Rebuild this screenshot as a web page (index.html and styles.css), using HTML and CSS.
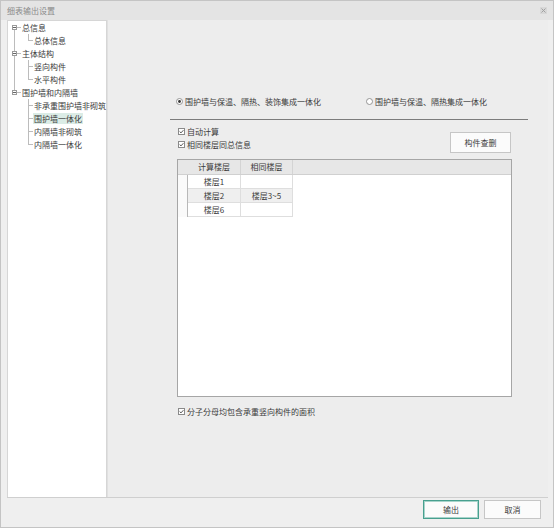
FILE: index.html
```html
<!DOCTYPE html>
<html lang="zh-CN">
<head>
<meta charset="utf-8">
<title>细表输出设置</title>
<link rel="stylesheet" href="styles.css">
</head>
<body>
<div class="window">
  <div class="titlebar">
    <span class="title">细表输出设置</span>
    <svg class="close" width="7" height="7" viewBox="0 0 7 7"><rect x="0" y="0" width="7" height="7" fill="#d8d8d8"/><path d="M1.5 1.5 L5.5 5.5 M5.5 1.5 L1.5 5.5" stroke="#a0a0a0" stroke-width="1"/></svg>
  </div>
  <div class="body">
    <div class="tree">
      <div class="node">
        <svg width="14" height="13" viewBox="0 0 14 13" shape-rendering="crispEdges"><line x1="6.5" y1="9" x2="6.5" y2="13" class="ln"/><rect x="4.5" y="4.5" width="4" height="4" class="box"/><line x1="5" y1="6.5" x2="8" y2="6.5" class="minus"/><line x1="9" y1="6.5" x2="13" y2="6.5" class="ln"/></svg>
        <span class="label">总信息</span>
      </div>
      <div class="node">
        <svg width="26" height="13" viewBox="0 0 26 13" shape-rendering="crispEdges"><line x1="6.5" y1="0" x2="6.5" y2="13" class="ln"/><line x1="20.5" y1="0" x2="20.5" y2="7" class="ln"/><line x1="20.5" y1="6.5" x2="25" y2="6.5" class="ln"/></svg>
        <span class="label">总体信息</span>
      </div>
      <div class="node">
        <svg width="14" height="13" viewBox="0 0 14 13" shape-rendering="crispEdges"><line x1="6.5" y1="0" x2="6.5" y2="4" class="ln"/><line x1="6.5" y1="9" x2="6.5" y2="13" class="ln"/><rect x="4.5" y="4.5" width="4" height="4" class="box"/><line x1="5" y1="6.5" x2="8" y2="6.5" class="minus"/><line x1="9" y1="6.5" x2="13" y2="6.5" class="ln"/></svg>
        <span class="label">主体结构</span>
      </div>
      <div class="node">
        <svg width="26" height="13" viewBox="0 0 26 13" shape-rendering="crispEdges"><line x1="6.5" y1="0" x2="6.5" y2="13" class="ln"/><line x1="20.5" y1="0" x2="20.5" y2="13" class="ln"/><line x1="20.5" y1="6.5" x2="25" y2="6.5" class="ln"/></svg>
        <span class="label">竖向构件</span>
      </div>
      <div class="node">
        <svg width="26" height="13" viewBox="0 0 26 13" shape-rendering="crispEdges"><line x1="6.5" y1="0" x2="6.5" y2="13" class="ln"/><line x1="20.5" y1="0" x2="20.5" y2="7" class="ln"/><line x1="20.5" y1="6.5" x2="25" y2="6.5" class="ln"/></svg>
        <span class="label">水平构件</span>
      </div>
      <div class="node">
        <svg width="14" height="13" viewBox="0 0 14 13" shape-rendering="crispEdges"><line x1="6.5" y1="0" x2="6.5" y2="4" class="ln"/><rect x="4.5" y="4.5" width="4" height="4" class="box"/><line x1="5" y1="6.5" x2="8" y2="6.5" class="minus"/><line x1="9" y1="6.5" x2="13" y2="6.5" class="ln"/></svg>
        <span class="label">围护墙和内隔墙</span>
      </div>
      <div class="node">
        <svg width="26" height="13" viewBox="0 0 26 13" shape-rendering="crispEdges"><line x1="20.5" y1="0" x2="20.5" y2="13" class="ln"/><line x1="20.5" y1="6.5" x2="25" y2="6.5" class="ln"/></svg>
        <span class="label">非承重围护墙非砌筑</span>
      </div>
      <div class="node">
        <svg width="26" height="13" viewBox="0 0 26 13" shape-rendering="crispEdges"><line x1="20.5" y1="0" x2="20.5" y2="13" class="ln"/><line x1="20.5" y1="6.5" x2="25" y2="6.5" class="ln"/></svg>
        <span class="label selected">围护墙一体化</span>
      </div>
      <div class="node">
        <svg width="26" height="13" viewBox="0 0 26 13" shape-rendering="crispEdges"><line x1="20.5" y1="0" x2="20.5" y2="13" class="ln"/><line x1="20.5" y1="6.5" x2="25" y2="6.5" class="ln"/></svg>
        <span class="label">内隔墙非砌筑</span>
      </div>
      <div class="node">
        <svg width="26" height="13" viewBox="0 0 26 13" shape-rendering="crispEdges"><line x1="20.5" y1="0" x2="20.5" y2="7" class="ln"/><line x1="20.5" y1="6.5" x2="25" y2="6.5" class="ln"/></svg>
        <span class="label">内隔墙一体化</span>
      </div>
    </div>
    <div class="main">
      <div class="radios">
        <label class="radio first">
          <svg width="7" height="7" viewBox="0 0 7 7"><circle cx="3.5" cy="3.5" r="3" fill="#fff" stroke="#8a8a8a" stroke-width="0.9"/><circle cx="3.5" cy="3.5" r="1.4" fill="#333"/></svg>
          <span>围护墙与保温、隔热、装饰集成一体化</span>
        </label>
        <label class="radio">
          <svg width="7" height="7" viewBox="0 0 7 7"><circle cx="3.5" cy="3.5" r="3" fill="#fff" stroke="#8a8a8a" stroke-width="0.9"/></svg>
          <span>围护墙与保温、隔热集成一体化</span>
        </label>
      </div>
      <div class="rule"></div>
      <div class="options">
        <div class="opt-top">
          <div class="checks">
            <label class="check">
              <svg width="7" height="7" viewBox="0 0 7 7"><rect x="0.5" y="0.5" width="6" height="6" fill="#fff" stroke="#8a8a8a"/><path d="M1.6 3.5 L3 4.9 L5.4 2.2" fill="none" stroke="#444" stroke-width="0.9"/></svg>
              <span>自动计算</span>
            </label>
            <label class="check">
              <svg width="7" height="7" viewBox="0 0 7 7"><rect x="0.5" y="0.5" width="6" height="6" fill="#fff" stroke="#8a8a8a"/><path d="M1.6 3.5 L3 4.9 L5.4 2.2" fill="none" stroke="#444" stroke-width="0.9"/></svg>
              <span>相同楼层同总信息</span>
            </label>
          </div>
          <button class="btn query">构件查删</button>
        </div>
        <div class="table">
          <div class="thead">
            <div class="corner"></div>
            <div class="th c1">计算楼层</div>
            <div class="th c2">相同楼层</div>
          </div>
          <div class="tr">
            <div class="rh"></div>
            <div class="td c1">楼层1</div>
            <div class="td c2"></div>
          </div>
          <div class="tr alt">
            <div class="rh"></div>
            <div class="td c1">楼层2</div>
            <div class="td c2">楼层3~5</div>
          </div>
          <div class="tr">
            <div class="rh"></div>
            <div class="td c1">楼层6</div>
            <div class="td c2"></div>
          </div>
        </div>
        <label class="check bottom">
          <svg width="7" height="7" viewBox="0 0 7 7"><rect x="0.5" y="0.5" width="6" height="6" fill="#fff" stroke="#8a8a8a"/><path d="M1.6 3.5 L3 4.9 L5.4 2.2" fill="none" stroke="#444" stroke-width="0.9"/></svg>
          <span>分子分母均包含承重竖向构件的面积</span>
        </label>
      </div>
    </div>
  </div>
  <div class="sep"></div>
  <div class="footer">
    <button class="btn primary">输出</button>
    <button class="btn cancel">取消</button>
  </div>
</div>
</body>
</html>
```
FILE: styles.css
```css
* { box-sizing: border-box; }
html, body { margin: 0; padding: 0; }
body {
  width: 554px;
  height: 528px;
  overflow: hidden;
  background: #efefef;
  font-family: "Noto Sans CJK SC", "Microsoft YaHei", sans-serif;
  font-size: 8px;
  color: #3a3a3a;
}
.window {
  width: 554px;
  height: 528px;
  border: 1px solid #c4c4c4;
  background: #efefef;
  display: flex;
  flex-direction: column;
}
.titlebar {
  flex: none;
  height: 19px;
  background: #e4e4e4;
  display: flex;
  align-items: center;
  justify-content: space-between;
  padding: 0 6px 0 6px;
  color: #8a8a8a;
}
.close { display: block; }
.body {
  flex: none;
  height: 477px;
  display: flex;
  padding: 0 5px 0 6px;
}
.tree {
  flex: none;
  width: 100px;
  background: #fff;
  border: 1px solid #d6d6d6;
  border-bottom: none;
}
.node {
  height: 13px;
  display: flex;
  align-items: center;
  white-space: nowrap;
  line-height: 13px;
}
.node svg { display: block; flex: none; }
.ln { stroke: #bcbcbc; stroke-width: 1; }
.box { fill: #fff; stroke: #9a9a9a; stroke-width: 1; }
.minus { stroke: #666; stroke-width: 1; }
.label { color: #3a3a3a; padding: 0 1px; margin-left: -1px; line-height: 11px; }
.label.selected { background: #dbece6; }
.main {
  flex: 1;
  background: #ededed;
  border-left: 1px solid #e0e0e0;
  display: flex;
  flex-direction: column;
}
.radios {
  margin-top: 75px;
  margin-left: 68px;
  height: 13px;
  display: flex;
  align-items: center;
}
.radio {
  display: flex;
  align-items: center;
  gap: 2px;
  white-space: nowrap;
}
.radio svg, .check svg { display: block; flex: none; }
.radio.first { width: 190px; }
.rule {
  margin-top: 11px;
  margin-left: 62px;
  width: 358px;
  height: 1px;
  background: #7c7c7c;
}
.options {
  margin-top: 5px;
  margin-left: 69px;
  width: 335px;
  display: flex;
  flex-direction: column;
}
.opt-top {
  display: flex;
  justify-content: space-between;
  align-items: flex-start;
}
.checks { display: flex; flex-direction: column; }
.check {
  height: 13px;
  display: flex;
  align-items: center;
  gap: 2px;
  padding-left: 1px;
  white-space: nowrap;
}
.btn {
  font-family: inherit;
  font-size: 8px;
  color: #3a3a3a;
  background: #fbfbfb;
  border: 1px solid #c6c6c6;
  padding: 0;
  margin: 0;
  height: 19px;
}
.query {
  width: 61px;
  height: 21px;
  margin-top: 7px;
  margin-right: 1px;
}
.table {
  margin-top: 6px;
  height: 238px;
  border: 1px solid #a6a6a6;
  background: #fff;
}
.thead {
  display: flex;
  height: 15px;
  background: #e7e7e7;
  border-bottom: 1px solid #d0d0d0;
}
.corner { width: 10px; }
.th, .td {
  text-align: center;
  line-height: 13px;
  border-right: 1px solid #d4d4d4;
}
.c1 { width: 53px; }
.c2 { width: 52px; }
.tr { display: flex; height: 14px; }
.rh {
  width: 10px;
  background: #fafafa;
  border-right: 1px solid #b8b8b8;
}
.td { border-bottom: 1px solid #dedede; border-right-color: #dedede; }
.tr.alt .td { background: #efefef; }
.check.bottom { margin-top: 8px; }
.sep {
  flex: none;
  margin: 0 5px 0 6px;
  height: 1px;
  background: #cfcfcf;
}
.footer {
  flex: none;
  display: flex;
  justify-content: flex-end;
  gap: 5px;
  padding: 2px 12px 0 0;
}
.primary {
  width: 56px;
  border: 1px solid #48a08f;
  box-shadow: inset 0 0 0 1px #a8d4cb;
}
.cancel { width: 57px; }
```
